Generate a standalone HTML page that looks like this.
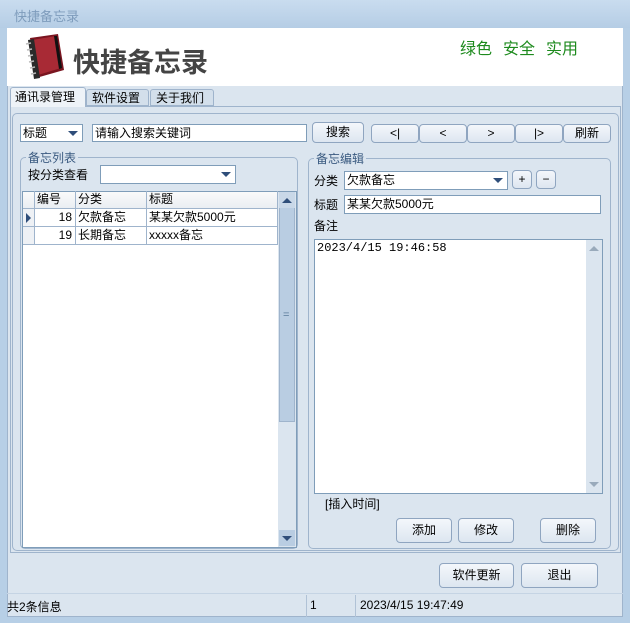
<!DOCTYPE html>
<html><head><meta charset="utf-8"><style>
*{box-sizing:border-box;margin:0;padding:0}
body{width:630px;height:623px;overflow:hidden;background:#b7cfe6;font-family:"Liberation Sans","Noto Sans CJK SC",sans-serif;font-size:12px;color:#000;position:relative}
.a{position:absolute}
.btn{position:absolute;border:1px solid #8fa5c0;border-radius:4px;background:linear-gradient(#f4f7fb,#dde6f0);text-align:center;font-size:12px}
.inp{position:absolute;background:#fff;border:1px solid #7f9db9}
.tri{position:absolute;width:0;height:0;border-left:5px solid transparent;border-right:5px solid transparent;border-top:5px solid #2f4e7a}
.grp{position:absolute;border:1px solid #9fb4cc;border-radius:5px}
.gl{position:absolute;background:#dbe5ef;color:#3a5a80;font-size:12px;padding:0 2px;top:-9px;left:5px}
.cell{position:absolute;border-right:1px solid #9fb4cc;border-bottom:1px solid #9fb4cc;height:18px;line-height:17px;padding:0 3px}
</style></head><body>
<div class="a" style="left:0;top:0;width:630px;height:28px;background:linear-gradient(#c9dcef,#b5cde5)"></div>
<div class="a" style="left:14px;top:6px;color:#7e9cbc;font-size:13px">快捷备忘录</div>
<div class="a" style="left:7px;top:28px;width:616px;height:589px;background:#dbe5ef;border:1px solid #9fb4cc"></div>
<div class="a" style="left:7px;top:28px;width:616px;height:58px;background:#fff"></div>
<svg class="a" style="left:20px;top:32px" width="48" height="50" viewBox="0 0 48 50">
<path d="M10 6 L38 2 L44 38 L16 46 Z" fill="#7a1520"/>
<path d="M12 8 L36 4 L41 36 L18 43 Z" fill="#a82a35"/>
<path d="M8 8 L14 7 L20 46 L14 47 Z" fill="#2a2a2a"/>
<path d="M34 4 L37 4 L42 36 L39 37 Z" fill="#111"/>
<g stroke="#bbb" stroke-width="1.5"><line x1="6" y1="12" x2="11" y2="11"/><line x1="7" y1="18" x2="12" y2="17"/><line x1="8" y1="24" x2="13" y2="23"/><line x1="9" y1="30" x2="14" y2="29"/><line x1="10" y1="36" x2="15" y2="35"/><line x1="11" y1="42" x2="16" y2="41"/></g>
</svg>
<div class="a" style="left:73px;top:41px;font-size:27px;font-weight:bold;color:#444">快捷备忘录</div>
<div class="a" style="left:460px;top:35px;font-size:16px;color:#1d8a1d;white-space:nowrap"><span>绿色</span><span style="margin-left:11px">安全</span><span style="margin-left:11px">实用</span></div>
<!-- tabs -->
<div class="a" style="left:10px;top:106px;width:611px;height:447px;background:#dbe5ef;border:1px solid #9fb4cc"></div>
<div class="a" style="left:10px;top:87px;width:76px;height:20px;background:#eef3f8;border:1px solid #9fb4cc;border-bottom:none;border-radius:3px 3px 0 0;padding-left:4px;line-height:18px">通讯录管理</div>
<div class="a" style="left:86px;top:89px;width:63px;height:17px;background:#d3dfeb;border:1px solid #9fb4cc;border-radius:3px 3px 0 0;padding-left:5px;line-height:16px">软件设置</div>
<div class="a" style="left:150px;top:89px;width:64px;height:17px;background:#d3dfeb;border:1px solid #9fb4cc;border-radius:3px 3px 0 0;padding-left:5px;line-height:16px">关于我们</div>
<div class="a" style="left:12px;top:113px;width:607px;height:438px;border:1px solid #9fb4cc;border-radius:5px"></div>
<!-- search -->
<div class="inp" style="left:20px;top:124px;width:63px;height:18px;padding-left:2px;line-height:16px">标题</div><div class="tri" style="left:68px;top:131px"></div>
<div class="inp" style="left:92px;top:124px;width:215px;height:18px;padding-left:2px;line-height:16px">请输入搜索关键词</div>
<div class="btn" style="left:312px;top:122px;width:52px;height:21px;line-height:19px">搜索</div>
<div class="btn" style="left:371px;top:124px;width:48px;height:19px;line-height:17px">&lt;|</div>
<div class="btn" style="left:419px;top:124px;width:48px;height:19px;line-height:17px">&lt;</div>
<div class="btn" style="left:467px;top:124px;width:48px;height:19px;line-height:17px">&gt;</div>
<div class="btn" style="left:515px;top:124px;width:48px;height:19px;line-height:17px">|&gt;</div>
<div class="btn" style="left:563px;top:124px;width:48px;height:19px;line-height:17px">刷新</div>
<!-- left group -->
<div class="grp" style="left:20px;top:157px;width:278px;height:392px"><div class="gl">备忘列表</div></div>
<div class="a" style="left:28px;top:166px">按分类查看</div>
<div class="inp" style="left:100px;top:165px;width:136px;height:19px"></div><div class="tri" style="left:221px;top:172px"></div>
<div class="a" style="left:22px;top:191px;width:275px;height:357px;background:#fff;border:1px solid #7f9db9"></div>
<div class="a" style="left:23px;top:192px;width:255px;height:17px;background:linear-gradient(#fafafa,#e9edf2)"></div>
<div class="a" style="left:23px;top:209px;width:11px;height:36px;background:#eef1f5"></div>
<div class="cell" style="left:23px;top:191px;width:12px"></div>
<div class="cell" style="left:34px;top:191px;width:42px">编号</div>
<div class="cell" style="left:75px;top:191px;width:72px">分类</div>
<div class="cell" style="left:146px;top:191px;width:132px">标题</div>
<div class="cell" style="left:23px;top:209px;width:12px"></div>
<div class="a" style="left:26px;top:213px;width:0;height:0;border-top:5px solid transparent;border-bottom:5px solid transparent;border-left:5px solid #2f4e7a"></div>
<div class="cell" style="left:34px;top:209px;width:42px;text-align:right">18</div>
<div class="cell" style="left:75px;top:209px;width:72px">欠款备忘</div>
<div class="cell" style="left:146px;top:209px;width:132px">某某欠款5000元</div>
<div class="cell" style="left:23px;top:227px;width:12px"></div>
<div class="cell" style="left:34px;top:227px;width:42px;text-align:right">19</div>
<div class="cell" style="left:75px;top:227px;width:72px">长期备忘</div>
<div class="cell" style="left:146px;top:227px;width:132px">xxxxx备忘</div>
<div class="a" style="left:278px;top:192px;width:18px;height:355px;background:#dbe5ef"></div>
<div class="a" style="left:279px;top:192px;width:16px;height:230px;background:#b9cde2;border:1px solid #9fb4cc"></div>
<div class="a" style="left:279px;top:192px;width:16px;height:16px;background:#c9d8e8"></div>
<div class="a" style="left:282px;top:198px;border-left:5px solid transparent;border-right:5px solid transparent;border-bottom:5px solid #2f4e7a"></div>
<div class="a" style="left:283px;top:309px;color:#5a7a9a;font-size:11px">=</div>
<div class="a" style="left:279px;top:530px;width:16px;height:16px;background:#b9cde2"></div>
<div class="tri" style="left:282px;top:536px"></div>
<!-- right group -->
<div class="grp" style="left:308px;top:158px;width:303px;height:391px"><div class="gl">备忘编辑</div></div>
<div class="a" style="left:314px;top:172px">分类</div>
<div class="inp" style="left:344px;top:171px;width:164px;height:19px;padding-left:2px;line-height:17px">欠款备忘</div><div class="tri" style="left:493px;top:178px"></div>
<div class="btn" style="left:512px;top:170px;width:20px;height:19px;line-height:16px">+</div>
<div class="btn" style="left:536px;top:170px;width:20px;height:19px;line-height:16px">−</div>
<div class="a" style="left:314px;top:196px">标题</div>
<div class="inp" style="left:344px;top:195px;width:257px;height:19px;padding-left:2px;line-height:17px">某某欠款5000元</div>
<div class="a" style="left:314px;top:217px">备注</div>
<div class="inp" style="left:314px;top:239px;width:289px;height:255px"></div>
<div class="a" style="left:317px;top:241px;font-family:'Liberation Mono',monospace;font-size:12px">2023/4/15 19:46:58</div>
<div class="a" style="left:586px;top:240px;width:16px;height:253px;background:#dbe5ef"></div>
<div class="a" style="left:589px;top:246px;border-left:5px solid transparent;border-right:5px solid transparent;border-bottom:5px solid #9ab"></div>
<div class="a" style="left:589px;top:482px;border-left:5px solid transparent;border-right:5px solid transparent;border-top:5px solid #9ab"></div>
<div class="a" style="left:325px;top:495px">[插入时间]</div>
<div class="btn" style="left:396px;top:518px;width:56px;height:25px;line-height:23px">添加</div>
<div class="btn" style="left:458px;top:518px;width:56px;height:25px;line-height:23px">修改</div>
<div class="btn" style="left:540px;top:518px;width:56px;height:25px;line-height:23px">删除</div>
<!-- bottom -->
<div class="btn" style="left:439px;top:563px;width:75px;height:25px;line-height:23px">软件更新</div>
<div class="btn" style="left:521px;top:563px;width:77px;height:25px;line-height:23px">退出</div>
<div class="a" style="left:7px;top:593px;width:616px;height:1px;background:#c5d4e4"></div>
<div class="a" style="left:7px;top:598px">共2条信息</div>
<div class="a" style="left:306px;top:595px;width:1px;height:22px;background:#b0c2d6"></div>
<div class="a" style="left:310px;top:598px">1</div>
<div class="a" style="left:355px;top:595px;width:1px;height:22px;background:#b0c2d6"></div>
<div class="a" style="left:360px;top:598px">2023/4/15 19:47:49</div>
</body></html>
